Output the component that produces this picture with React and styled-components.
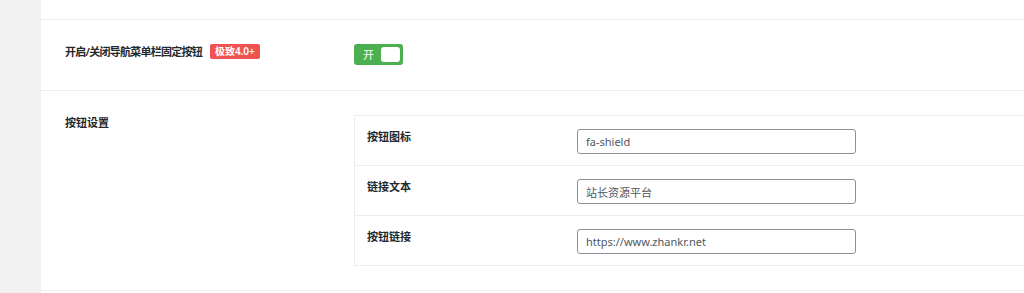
import styled, { createGlobalStyle } from "styled-components";

const GlobalStyle = createGlobalStyle`
  html, body {
    margin: 0;
    padding: 0;
    background: #fff;
    overflow: hidden;
  }
  body {
    font-family: "Noto Sans", "Noto Sans CJK SC", sans-serif;
    color: #23282d;
  }
`;

const Page = styled.div`
  display: flex;
  height: 293px;
`;

const Sidebar = styled.div`
  width: 41px;
  flex-shrink: 0;
  background: #f1f1f1;
`;

const Main = styled.div`
  flex: 1;
  min-width: 0;
  overflow: hidden;
  background: #fff;
`;

const TopStrip = styled.div`
  height: 19px;
  border-bottom: 1px solid #ededed;
`;

const Row = styled.div`
  display: flex;
  padding: 24px 0 ${(props) => props.$bottom || 24}px 24px;
  border-bottom: 1px solid #ededed;
`;

const Title = styled.div`
  width: 289px;
  flex-shrink: 0;
  display: flex;
  align-items: flex-start;
  font-size: 11px;
  line-height: 16px;
  font-weight: 600;
  color: #23282d;
`;

const TitleText = styled.span`
  letter-spacing: ${(props) => (props.$tight ? "-0.75px" : "0")};
`;

const Badge = styled.span`
  display: inline-block;
  margin-left: 8px;
  padding: 0 5px;
  height: 15px;
  line-height: 15px;
  font-size: 10px;
  font-weight: 600;
  color: #fff;
  background: #ef5350;
  border-radius: 2px;
`;

const Field = styled.div`
  flex-shrink: 0;
  width: 720px;
`;

const Switch = styled.div`
  display: flex;
  align-items: center;
  justify-content: space-between;
  width: 49px;
  height: 21px;
  box-sizing: border-box;
  padding: 0 3px 0 9px;
  background: #4caf50;
  border-radius: 3px;
`;

const SwitchText = styled.span`
  font-size: 11px;
  line-height: 1;
  color: #fff;
`;

const Knob = styled.span`
  width: 19px;
  height: 15px;
  background: #fff;
  border-radius: 3px;
`;

const Group = styled.div`
  border: 1px solid #ededed;
`;

const SubRow = styled.div`
  display: flex;
  align-items: flex-start;
  height: 49px;
  box-sizing: border-box;
  padding: 13px 0 0 12px;

  & + & {
    height: 50px;
    border-top: 1px solid #ededed;
  }
`;

const SubLabel = styled.div`
  width: 210px;
  font-size: 11px;
  line-height: 16px;
  font-weight: 700;
  color: #23282d;
`;

const Input = styled.input`
  width: 279px;
  height: 25px;
  box-sizing: border-box;
  margin: 0;
  padding: 0 8px;
  border: 1px solid #8c8f94;
  border-radius: 3px;
  font-family: "Noto Sans", "Noto Sans CJK SC", sans-serif;
  font-size: 11px;
  color: #50575e;
  background: #fff;
  outline: none;
`;

const fields = [
  { label: "按钮图标", value: "fa-shield" },
  { label: "链接文本", value: "站长资源平台" },
  { label: "按钮链接", value: "https://www.zhankr.net" },
];

const App = () => {
  return (
    <>
      <GlobalStyle />
      <Page>
        <Sidebar />
        <Main>
          <TopStrip />
          <Row $bottom={25}>
            <Title>
              <TitleText $tight>开启/关闭导航菜单栏固定按钮</TitleText>
              <Badge>极致4.0+</Badge>
            </Title>
            <Field>
              <Switch>
                <SwitchText>开</SwitchText>
                <Knob />
              </Switch>
            </Field>
          </Row>
          <Row>
            <Title>
              <TitleText>按钮设置</TitleText>
            </Title>
            <Field>
              <Group>
                {fields.map((f) => (
                  <SubRow key={f.label}>
                    <SubLabel>{f.label}</SubLabel>
                    <Input defaultValue={f.value} />
                  </SubRow>
                ))}
              </Group>
            </Field>
          </Row>
        </Main>
      </Page>
    </>
  );
};

export default App;
